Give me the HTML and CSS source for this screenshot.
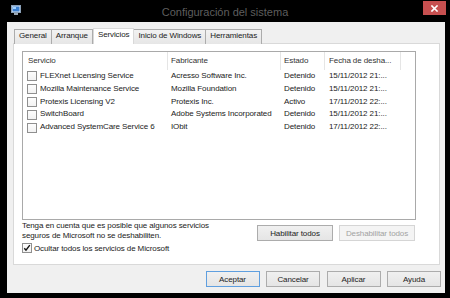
FILE: index.html
```html
<!DOCTYPE html>
<html lang="es">
<head>
<meta charset="utf-8">
<title>Configuración del sistema</title>
<link rel="stylesheet" href="styles.css">
</head>
<body>
<div class="window">
  <div class="titlebar">
    <svg class="appicon" viewBox="0 0 10 10" width="10" height="10">
      <rect x="0.5" y="0.5" width="9" height="7" fill="#dfe6ee" stroke="#8aa0b8" stroke-width="1"/>
      <rect x="1.5" y="1.5" width="7" height="5" fill="#3b7fd0"/>
      <rect x="2" y="2" width="3" height="2" fill="#9fd0ff"/>
      <rect x="3" y="8" width="4" height="2" fill="#9aa7b5"/>
    </svg>
    <div class="title">Configuración del sistema</div>
    <div class="close">
      <svg viewBox="0 0 7 7" width="7" height="7"><path d="M1 1L6 6M6 1L1 6" stroke="#fff" stroke-width="1.6" stroke-linecap="square"/></svg>
    </div>
  </div>
  <div class="client">
    <div class="tabs">
      <div class="tab">General</div>
      <div class="tab">Arranque</div>
      <div class="tab active">Servicios</div>
      <div class="tab">Inicio de Windows</div>
      <div class="tab">Herramientas</div>
    </div>
    <div class="panel">
      <div class="list">
        <div class="row head">
          <div class="cell c1">Servicio</div>
          <div class="cell c2">Fabricante</div>
          <div class="cell c3">Estado</div>
          <div class="cell c4">Fecha de desha...</div>
          <div class="cell c5"></div>
        </div>
        <div class="row">
          <div class="cell c1"><span class="cb"></span>FLEXnet Licensing Service</div>
          <div class="cell c2">Acresso Software Inc.</div>
          <div class="cell c3">Detenido</div>
          <div class="cell c4">15/11/2012 21:...</div>
        </div>
        <div class="row">
          <div class="cell c1"><span class="cb"></span>Mozilla Maintenance Service</div>
          <div class="cell c2">Mozilla Foundation</div>
          <div class="cell c3">Detenido</div>
          <div class="cell c4">15/11/2012 21:...</div>
        </div>
        <div class="row">
          <div class="cell c1"><span class="cb"></span>Protexis Licensing V2</div>
          <div class="cell c2">Protexis Inc.</div>
          <div class="cell c3">Activo</div>
          <div class="cell c4">17/11/2012 22:...</div>
        </div>
        <div class="row">
          <div class="cell c1"><span class="cb"></span>SwitchBoard</div>
          <div class="cell c2">Adobe Systems Incorporated</div>
          <div class="cell c3">Detenido</div>
          <div class="cell c4">15/11/2012 21:...</div>
        </div>
        <div class="row">
          <div class="cell c1"><span class="cb"></span>Advanced SystemCare Service 6</div>
          <div class="cell c2">IObit</div>
          <div class="cell c3">Detenido</div>
          <div class="cell c4">17/11/2012 22:...</div>
        </div>
      </div>
      <div class="below">
        <div class="note">Tenga en cuenta que es posible que algunos servicios<br>seguros de Microsoft no se deshabiliten.</div>
        <div class="btns">
          <div class="btn wide">Habilitar todos</div>
          <div class="btn wide disabled">Deshabilitar todos</div>
        </div>
      </div>
      <div class="hide">
        <span class="cb checked"><svg viewBox="0 0 8 8" width="8" height="8"><path d="M1.3 4.2L3 6.2L6.8 1.2" fill="none" stroke="#111" stroke-width="1.4"/></svg></span>
        <span>Ocultar todos los servicios de Microsoft</span>
      </div>
    </div>
    <div class="footer">
      <div class="btn default">Aceptar</div>
      <div class="btn">Cancelar</div>
      <div class="btn">Aplicar</div>
      <div class="btn">Ayuda</div>
    </div>
  </div>
</div>
</body>
</html>
```

FILE: styles.css
```css
* { box-sizing: border-box; }
html, body { margin: 0; padding: 0; }
body {
  background: #000;
  width: 450px;
  height: 298px;
  overflow: hidden;
  font-family: "Liberation Sans", Arial, sans-serif;
  font-size: 8px;
  letter-spacing: -0.1px;
  color: #222;
}
.window {
  width: 450px;
  height: 298px;
  background: #000;
  display: flex;
  flex-direction: column;
}
.titlebar {
  height: 22px;
  display: grid;
  grid-template-columns: 1fr auto 1fr;
}
.appicon { margin: 5px 0 0 11px; }
.title {
  font-size: 11px;
  letter-spacing: 0;
  color: #5e5e5e;
  padding-top: 2px;
  line-height: 20px;
  white-space: nowrap;
}
.close {
  justify-self: end;
  width: 23px;
  height: 14px;
  margin: 1px 4px 0 0;
  background: #c75050;
  display: flex;
  align-items: center;
  justify-content: center;
}
.client {
  margin: 0 5px 0 7px;
  height: 271px;
  background: #f0f0f0;
  padding: 6px 5px 0 6px;
}
.tabs {
  display: flex;
  align-items: flex-end;
  height: 16px;
  margin-bottom: -1px;
  padding-left: 1px;
}
.tab {
  height: 15px;
  line-height: 12px;
  padding: 0 4px;
  border: 1px solid #acacac;
  border-bottom: none;
  background: linear-gradient(#f2f2f2, #e6e6e6);
  margin-left: -1px;
  white-space: nowrap;
  color: #222;
}
.tab:first-child { margin-left: 0; }
.tab.active {
  position: relative;
  height: 16px;
  background: #fff;
  border-color: #d9d9d9;
  margin-left: 0;
  padding: 0 4px;
}
.panel {
  height: 222px;
  border: 1px solid #d9d9d9;
  background: #fff;
  padding: 7px 0 0 8px;
}
.list {
  width: 394px;
  height: 169px;
  border: 1px solid #a9a9a9;
  background: #fff;
}
.row {
  display: grid;
  grid-template-columns: 145px 113px 44px 76px 1fr;
  height: 12.8px;
  line-height: 12.8px;
}
.row.head {
  height: 18px;
  line-height: 18px;
  color: #333;
}
.cell {
  white-space: nowrap;
  overflow: hidden;
  display: flex;
  align-items: center;
}
.head .cell { border-right: 1px solid #e5e5e5; }
.head .c5 { border-right: none; }
.c1 { padding-left: 4px; }
.head .c1 { padding-left: 5px; }
.c2, .c3 { padding-left: 3px; }
.c4 { padding-left: 4px; }
.cb {
  display: inline-flex;
  align-items: center;
  justify-content: center;
  width: 10px;
  height: 10px;
  border: 1px solid #8f8f8f;
  background: linear-gradient(#fdfdfd, #f2f2f2);
  margin-right: 3px;
  flex: none;
}
.below {
  width: 394px;
  margin-top: 1px;
  display: flex;
  justify-content: space-between;
  align-items: flex-start;
  height: 20px;
}
.note { line-height: 9.5px; }
.btns {
  display: flex;
  gap: 6px;
  margin-top: 4px;
  margin-right: 1px;
}
.btn {
  width: 54px;
  height: 16px;
  border: 1px solid #acacac;
  background: linear-gradient(#f0f0f0, #e5e5e5);
  display: flex;
  align-items: center;
  justify-content: center;
  white-space: nowrap;
  color: #222;
}
.btn.wide { width: 76px; }
.btn.disabled {
  border-color: #d5d5d5;
  background: #f4f4f4;
  color: #a2a2a2;
}
.btn.default { border-color: #5f9fdf; }
.hide {
  height: 14px;
  display: flex;
  align-items: center;
}
.hide .cb { margin-right: 2px; }
.footer {
  margin-top: 6px;
  margin-right: -1px;
  display: flex;
  justify-content: flex-end;
  gap: 6.5px;
}
```
